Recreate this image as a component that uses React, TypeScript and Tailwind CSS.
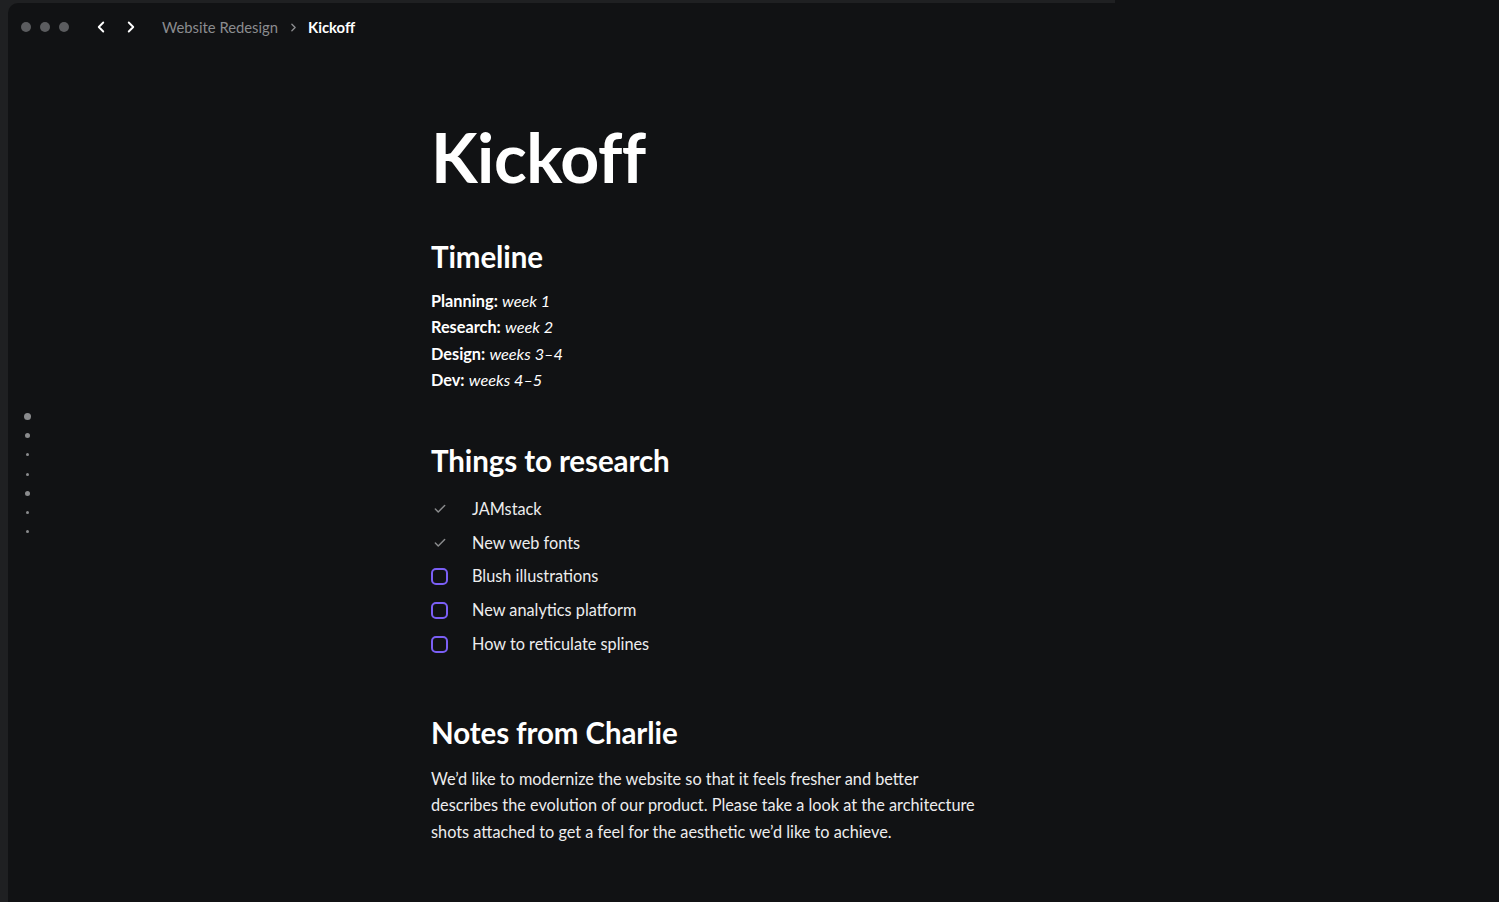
import { ChevronLeft, ChevronRight, Check } from 'lucide-react';

const timeline = [
    { label: 'Planning:', value: 'week 1' },
    { label: 'Research:', value: 'week 2' },
    { label: 'Design:', value: 'weeks 3–4' },
    { label: 'Dev:', value: 'weeks 4–5' },
];

const research = [
    { text: 'JAMstack', done: true },
    { text: 'New web fonts', done: true },
    { text: 'Blush illustrations', done: false },
    { text: 'New analytics platform', done: false },
    { text: 'How to reticulate splines', done: false },
];

// outline markers on the left edge: h1, h2, items...
const outline = [7, 5, 3, 3, 5, 3, 3];

export default function App() {
    return (
        <div className="h-[902px] w-full overflow-hidden bg-[#1f2022] flex flex-col font-['Lato',sans-serif] text-white">
            <div className="flex h-[3px] shrink-0">
                <div className="w-[1115px] h-full" />
                <div className="flex-1 h-full bg-[#111214]" />
            </div>
            <div className="flex-1 ml-[8px] rounded-tl-[10px] bg-[#111214] flex flex-col">
                {/* top bar */}
                <div className="flex items-center h-[46px] pt-[2px] pl-[13px]">
                    <div className="flex gap-[9px]">
                        <span className="w-[10px] h-[10px] rounded-full bg-[#5b5c5f]" />
                        <span className="w-[10px] h-[10px] rounded-full bg-[#5b5c5f]" />
                        <span className="w-[10px] h-[10px] rounded-full bg-[#5b5c5f]" />
                    </div>
                    <div className="flex items-center gap-[12px] ml-[23px]">
                        <ChevronLeft size={18} strokeWidth={2.5} className="text-white" />
                        <ChevronRight size={18} strokeWidth={2.5} className="text-white" />
                    </div>
                    <div className="flex items-center ml-[22px] text-[14.8px]">
                        <span className="text-[#8b8c8f]">Website Redesign</span>
                        <ChevronRight size={13} strokeWidth={2.5} className="text-[#8b8c8f] ml-[9px] mr-[8px]" />
                        <span className="font-bold text-white">Kickoff</span>
                    </div>
                </div>

                <div className="flex flex-1">
                    {/* outline dots */}
                    <div className="w-[38px] flex flex-col items-center pt-[358px]">
                        {outline.map((d, i) => (
                            <div key={i} className="h-[19.2px] flex items-center justify-center">
                                <span
                                    className="rounded-full bg-[#8a8b8d] block"
                                    style={{ width: d, height: d }}
                                />
                            </div>
                        ))}
                    </div>

                    {/* document */}
                    <div className="pl-[385px] pt-[68px]">
                        <h1 className="text-[68px] font-bold leading-[80px] tracking-[-0.5px]">Kickoff</h1>

                        <h2 className="text-[29.5px] font-bold leading-[36px] mt-[42px] tracking-[-0.1px]">Timeline</h2>
                        <div className="mt-[13px] text-[16.3px] leading-[26.3px]">
                            {timeline.map(t => (
                                <div key={t.label}>
                                    <span className="font-bold">{t.label}</span>{' '}
                                    <span className="italic">{t.value}</span>
                                </div>
                            ))}
                        </div>

                        <h2 className="text-[29.5px] font-bold leading-[36px] mt-[50px] tracking-[-0.1px]">Things to research</h2>
                        <div className="mt-[13px] flex flex-col">
                            {research.map(r => (
                                <div key={r.text} className="flex items-center h-[33.8px] text-[16.3px]">
                                    <div className="w-[41px] flex items-center">
                                        {r.done ? (
                                            <Check size={14} strokeWidth={2.5} className="text-[#8a8b8d] ml-[2px]" />
                                        ) : (
                                            <span className="w-[17px] h-[17px] rounded-[5px] border-2 border-[#7b5ff5] block" />
                                        )}
                                    </div>
                                    <span className="text-[#ededee]">{r.text}</span>
                                </div>
                            ))}
                        </div>

                        <h2 className="text-[29.5px] font-bold leading-[36px] mt-[54px] tracking-[-0.1px]">Notes from Charlie</h2>
                        <p className="mt-[15px] text-[16.3px] leading-[26.3px] text-[#ededee]">
                            We’d like to modernize the website so that it feels fresher and better<br />
                            describes the evolution of our product. Please take a look at the architecture<br />
                            shots attached to get a feel for the aesthetic we’d like to achieve.
                        </p>
                    </div>
                </div>
            </div>
        </div>
    );
}
